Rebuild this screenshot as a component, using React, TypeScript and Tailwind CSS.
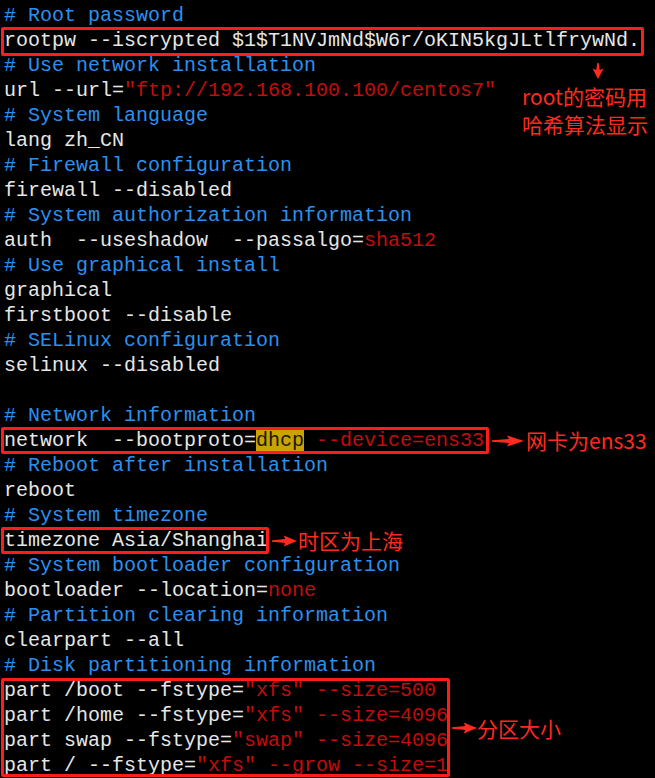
type Seg = { t: string; c?: "c" | "s" | "h" };
type Line = Seg[];

const segClass = (c?: string) => {
  if (c === "c") return "text-[#2a90f0]";
  if (c === "s") return "text-[#c40c0c]";
  if (c === "h") return "bg-[#c9a400] text-[#1c1800]";
  return "text-[#e6e6e6]";
};

const cm = (t: string): Line => [{ t, c: "c" }];
const tx = (t: string): Line => [{ t }];

const CodeLine = ({ segs }: { segs: Line }) => (
  <div className="h-[25px] leading-[25px] whitespace-pre">
    {segs.map((s, j) => (
      <span key={j} className={segClass(s.c)}>
        {s.t}
      </span>
    ))}
  </div>
);

const Lines = ({ items }: { items: Line[] }) => (
  <>
    {items.map((l, i) => (
      <CodeLine key={i} segs={l} />
    ))}
  </>
);

const ArrowRight = ({ className = "" }: { className?: string }) => (
  <svg className={className} width="32" height="12" viewBox="0 0 32 12" preserveAspectRatio="none">
    <polygon points="0,5.3 17,4 15,0.5 32,6 15,11.5 17,8 0,6.7" fill="#ff2a1f" />
  </svg>
);

const ArrowDown = ({ className = "" }: { className?: string }) => (
  <svg className={className} width="12" height="16" viewBox="0 0 12 16">
    <polygon points="5.3,0 6.7,0 7.8,7 11.5,5.5 6,16 0.5,5.5 4.2,7" fill="#ff2a1f" />
  </svg>
);

const cjk = "font-['Noto_Sans_CJK_SC','Noto_Sans',sans-serif] text-[#ff2a1f] text-[21px] whitespace-nowrap";

export default function App() {
  return (
    <div className="relative w-[655px] h-[778px] overflow-hidden bg-black">
      <div className="pt-[3px] pl-[4px] font-['Liberation_Mono','DejaVu_Sans_Mono',monospace] text-[20px]">
        <CodeLine segs={cm("# Root password")} />

        {/* root password, boxed */}
        <div className="relative w-fit">
          <CodeLine segs={tx("rootpw --iscrypted $1$T1NVJmNd$W6r/oKIN5kgJLtlfrywNd.")} />
          <span className="absolute -left-[3px] -right-[4px] -top-[1px] -bottom-[3px] border-[3px] border-[#ff1c1c] rounded-[2px]" />
        </div>

        <Lines
          items={[
            cm("# Use network installation"),
            [{ t: "url --url=" }, { t: '"ftp://192.168.100.100/centos7"', c: "s" }],
            cm("# System language"),
            tx("lang zh_CN"),
            cm("# Firewall configuration"),
            tx("firewall --disabled"),
            cm("# System authorization information"),
            [{ t: "auth  --useshadow  --passalgo=" }, { t: "sha512", c: "s" }],
            cm("# Use graphical install"),
            tx("graphical"),
            tx("firstboot --disable"),
            cm("# SELinux configuration"),
            tx("selinux --disabled"),
            tx(" "),
            cm("# Network information"),
          ]}
        />

        <div className="flex items-center">
          <div className="relative">
            <CodeLine
              segs={[
                { t: "network  --bootproto=" },
                { t: "dhcp", c: "h" },
                { t: " --device=ens33", c: "s" },
              ]}
            />
            <span className="absolute -left-[3px] -right-[5px] -top-[1px] -bottom-[1px] border-[3px] border-[#ff1c1c] rounded-[2px]" />
          </div>
          <ArrowRight className="ml-[8px]" />
          <span className={`${cjk} ml-[2px] leading-[25px] h-[25px]`}>网卡为ens33</span>
        </div>

        <Lines items={[cm("# Reboot after installation"), tx("reboot"), cm("# System timezone")]} />

        <div className="flex items-center">
          <div className="relative">
            <CodeLine segs={tx("timezone Asia/Shanghai")} />
            <span className="absolute -left-[3px] -right-[1px] -top-[1px] -bottom-[1px] border-[3px] border-[#ff1c1c] rounded-[2px]" />
          </div>
          <ArrowRight className="ml-[4px] w-[25px]" />
          <span className={`${cjk} ml-[1px] leading-[25px] h-[25px]`}>时区为上海</span>
        </div>

        <Lines
          items={[
            cm("# System bootloader configuration"),
            [{ t: "bootloader --location=" }, { t: "none", c: "s" }],
            cm("# Partition clearing information"),
            tx("clearpart --all"),
            cm("# Disk partitioning information"),
          ]}
        />

        <div className="flex items-center">
          <div className="relative">
            <Lines
              items={[
                [{ t: "part /boot --fstype=" }, { t: '"xfs" --size=500', c: "s" }],
                [{ t: "part /home --fstype=" }, { t: '"xfs" --size=4096', c: "s" }],
                [{ t: "part swap --fstype=" }, { t: '"swap" --size=4096', c: "s" }],
                [{ t: "part / --fstype=" }, { t: '"xfs" --grow --size=1', c: "s" }],
              ]}
            />
            <span className="absolute -left-[3px] -right-[2px] top-0 bottom-[1px] border-[3px] border-[#ff1c1c] rounded-[2px]" />
          </div>
          <ArrowRight className="ml-[4px] w-[25px]" />
          <span className={`${cjk} leading-[25px] h-[25px]`}>分区大小</span>
        </div>
      </div>

      {/* note under the root password box */}
      <div className="absolute left-[522px] top-[63px] flex flex-col items-start">
        <ArrowDown className="ml-[70px]" />
        <div className={`${cjk} mt-[3px] leading-[28px]`}>
          root的密码用
          <br />
          哈希算法显示
        </div>
      </div>
    </div>
  );
}
